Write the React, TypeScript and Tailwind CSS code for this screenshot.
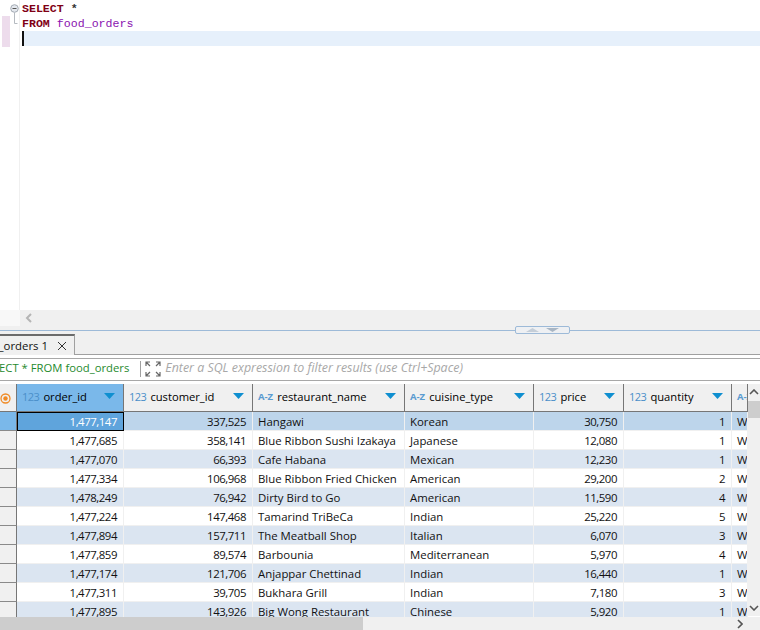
const COLS = [
  { w: 107, name: 'order_id', kind: '123' },
  { w: 129, name: 'customer_id', kind: '123' },
  { w: 152, name: 'restaurant_name', kind: 'az' },
  { w: 129, name: 'cuisine_type', kind: 'az' },
  { w: 90, name: 'price', kind: '123' },
  { w: 108, name: 'quantity', kind: '123' },
  { w: 16, name: '', kind: 'az' },
]

const ROWS = [
  ['1,477,147', '337,525', 'Hangawi', 'Korean', '30,750', '1'],
  ['1,477,685', '358,141', 'Blue Ribbon Sushi Izakaya', 'Japanese', '12,080', '1'],
  ['1,477,070', '66,393', 'Cafe Habana', 'Mexican', '12,230', '1'],
  ['1,477,334', '106,968', 'Blue Ribbon Fried Chicken', 'American', '29,200', '2'],
  ['1,478,249', '76,942', 'Dirty Bird to Go', 'American', '11,590', '4'],
  ['1,477,224', '147,468', 'Tamarind TriBeCa', 'Indian', '25,220', '5'],
  ['1,477,894', '157,711', 'The Meatball Shop', 'Italian', '6,070', '3'],
  ['1,477,859', '89,574', 'Barbounia', 'Mediterranean', '5,970', '4'],
  ['1,477,174', '121,706', 'Anjappar Chettinad', 'Indian', '16,440', '1'],
  ['1,477,311', '39,705', 'Bukhara Grill', 'Indian', '7,180', '3'],
  ['1,477,895', '143,926', 'Big Wong Restaurant', 'Chinese', '5,920', '1'],
]

function Header({ col, active }: { col: (typeof COLS)[number]; active: boolean }) {
  return (
    <div
      style={{ width: col.w }}
      className={`relative flex h-[28px] shrink-0 items-center overflow-hidden border-r border-b border-[#767676] pl-[5px] whitespace-nowrap ${active ? 'bg-[#7ab8ea]' : 'bg-[#f0f0f0]'}`}
    >
      {col.kind === '123' ? (
        <span className="mr-[4px] text-[11px] tracking-[-0.5px] text-[#4a8fc9]">123</span>
      ) : (
        <span className="mr-[4px] text-[9.5px] font-bold text-[#5a9bd0]">A-Z</span>
      )}
      <span className="text-[11.2px] text-black">{col.name}</span>
      {col.name && (
        <svg width="11" height="6" viewBox="0 0 11 6" className="absolute top-[9px] right-[8px]">
          <path d="M0 0h11L5.5 6z" fill="#0f8fd0" />
        </svg>
      )}
    </div>
  )
}

export default function App() {
  return (
    <div className="flex h-[630px] w-[760px] flex-col overflow-hidden bg-white font-['Open_Sans',sans-serif] text-[11.4px] text-[#111]">
      {/* Editor */}
      <div className="flex h-[310px] shrink-0 font-['Liberation_Mono',monospace] text-[11.6px] leading-[15px]">
        <div className="relative h-full w-[20px] shrink-0 border-r border-[#f0f0f0] bg-white">
          <div className="absolute top-[16px] left-[2px] h-[31px] w-[8px] bg-[#eddcec]" />
          <svg width="10" height="22" viewBox="0 0 10 22" className="absolute top-[4px] left-[10px]">
            <circle cx="4.5" cy="4.5" r="3.8" fill="#e4e8ee" stroke="#a3aab3" />
            <path d="M2.5 4.5h4" stroke="#555" />
            <path d="M4.5 8.5v11h3" stroke="#b5bac0" fill="none" />
          </svg>
        </div>
        <div className="flex flex-1 flex-col pt-[1px]">
          <div className="flex h-[15px] items-center pl-[2px]">
            <span className="font-bold text-[#7f0015]">SELECT</span>
            <span className="ml-[7px] font-bold text-[#333]">*</span>
          </div>
          <div className="flex h-[15px] items-center pl-[2px]">
            <span className="font-bold text-[#7f0015]">FROM</span>
            <span className="ml-[7px] text-[#8a12b0]">food_orders</span>
          </div>
          <div className="ml-[2px] h-[15px] border-l-2 border-[#111] bg-[#e6f0fb]" />
        </div>
      </div>

      {/* Editor scrollbar */}
      <div className="flex h-[20px] shrink-0 bg-[#f0f0f0]">
        <div className="h-[16px] w-[20px] bg-[#f8f8f8]" />
        <svg width="8" height="10" viewBox="0 0 8 10" className="mt-[3px] ml-[5px]">
          <path d="M6 1L2 5l4 4" stroke="#b5b5b5" strokeWidth="2" fill="none" />
        </svg>
      </div>

      {/* Sash */}
      <div className="relative h-px shrink-0 bg-[#9dbad8]">
        <div className="absolute -top-[4px] left-[515px] flex h-[8px] w-[55px] items-center justify-center gap-[7px] rounded-[2px] border border-[#9dbad8] bg-[#eef0f3]">
          <svg width="13" height="4" viewBox="0 0 13 4"><path d="M0 4h13L6.5 0z" fill="#c5ced8" /></svg>
          <svg width="13" height="4" viewBox="0 0 13 4"><path d="M0 0h13L6.5 4z" fill="#a9b6c4" /></svg>
        </div>
      </div>

      {/* Result tabs */}
      <div className="flex h-[24px] shrink-0 items-end border-b border-[#a0a0a0] bg-[#f0f0f0]">
        <div className="-mb-px flex h-[21px] w-[75px] shrink-0 items-center justify-end overflow-hidden border-t-2 border-r border-t-[#6b6b6b] border-r-[#a0a0a0] bg-[#f0f0f0] pr-[7px]">
          <span className="whitespace-nowrap">d_orders 1</span>
          <svg width="10" height="10" viewBox="0 0 10 10" className="ml-[9px] shrink-0">
            <path d="M1 1l8 8M9 1l-8 8" stroke="#333" strokeWidth="1" />
          </svg>
        </div>
      </div>

      {/* Filter bar */}
      <div className="mt-[3px] flex h-[23px] shrink-0 items-center overflow-hidden border-t border-b border-[#a8a8a8] pb-[2px]">
        <span className="ml-[-1px] whitespace-nowrap text-[11.3px] text-[#1f8a2e]">ECT * FROM food_orders</span>
        <div className="mr-[4px] ml-[11px] h-[16px] w-px bg-[#a0a0a0]" />
        <svg width="16" height="16" viewBox="0 0 16 16" fill="none" stroke="#666" strokeWidth="1.2">
          <path d="M1 5V1h4M15 5V1h-4M1 11v4h4M15 11v4h-4M1 1l4 4M15 1l-4 4M1 15l4-4M15 15l-4-4" />
        </svg>
        <span className="ml-[4px] whitespace-nowrap text-[12.4px] text-[#a8a8a8] italic">Enter a SQL expression to filter results (use Ctrl+Space)</span>
      </div>

      {/* Result grid */}
      <div className="mt-[3px] flex min-h-0 flex-1">
        <div className="relative min-w-0 flex-1 overflow-hidden">
          <div className="flex">
            <div className="flex h-[28px] w-[17px] shrink-0 items-center justify-center border-r border-b border-[#767676] bg-[#f0f0f0]">
              <svg width="11" height="11" viewBox="0 0 11 11" className="mt-[2px] mr-[5px] shrink-0">
                <circle cx="5.5" cy="5.5" r="4.5" fill="none" stroke="#f08a24" strokeWidth="1.3" />
                <circle cx="5.5" cy="5.5" r="2.2" fill="#f08a24" />
              </svg>
            </div>
            {COLS.map((col, i) => (
              <Header key={col.name || i} col={col} active={i === 0} />
            ))}
          </div>
          {ROWS.map((row, r) => (
            <div key={row[0]} className="flex h-[19px]">
              <div
                className={`h-[19px] w-[17px] shrink-0 border-r border-b border-r-[#767676] border-b-[#8a8a8a] ${r === 0 ? 'bg-[#7ab8ea]' : 'bg-[#f0f0f0]'}`}
              />
              {COLS.map((col, c) => {
                const value = c === 6 ? 'W' : row[c]
                const right = c === 0 || c === 1 || c === 4 || c === 5
                const focused = r === 0 && c === 0
                const bg = focused
                  ? 'bg-[#5fa4dc] text-white outline outline-1 -outline-offset-1 outline-black'
                  : r === 0
                    ? 'bg-[#bdd5eb]'
                    : r % 2 === 0
                      ? 'bg-[#dbe5f1]'
                      : 'bg-white'
                return (
                  <div
                    key={c}
                    style={{ width: col.w }}
                    className={`flex h-[19px] shrink-0 items-center overflow-hidden border-r border-b border-[#f0f0f0] pt-[2px] whitespace-nowrap ${right ? 'justify-end pr-[6px] tracking-[-0.45px]' : 'justify-start pl-[5px]'} ${bg}`}
                  >
                    {value}
                  </div>
                )
              })}
            </div>
          ))}
        </div>
        {/* Vertical scrollbar */}
        <div className="flex h-[232px] w-[12px] shrink-0 flex-col items-center bg-[#f0f0f0]">
          <svg width="10" height="6" viewBox="0 0 10 6" className="mt-[5px]">
            <path d="M1 5l4-4 4 4" stroke="#555" strokeWidth="1.6" fill="none" />
          </svg>
          <div className="mt-[6px] h-[17px] w-full bg-[#cdcdcd]" />
          <svg width="10" height="6" viewBox="0 0 10 6" className="mt-auto mb-[5px]">
            <path d="M1 1l4 4 4-4" stroke="#555" strokeWidth="1.6" fill="none" />
          </svg>
        </div>
      </div>

      {/* Bottom scrollbar */}
      <div className="flex h-[13px] shrink-0 items-center bg-[#f0f0f0]">
        <div className="h-full w-[363px] bg-[#cdcdcd]" />
        <svg width="6" height="10" viewBox="0 0 6 10" className="mr-[17px] ml-auto">
          <path d="M1 1l4 4-4 4" stroke="#555" strokeWidth="1.6" fill="none" />
        </svg>
      </div>
    </div>
  )
}
